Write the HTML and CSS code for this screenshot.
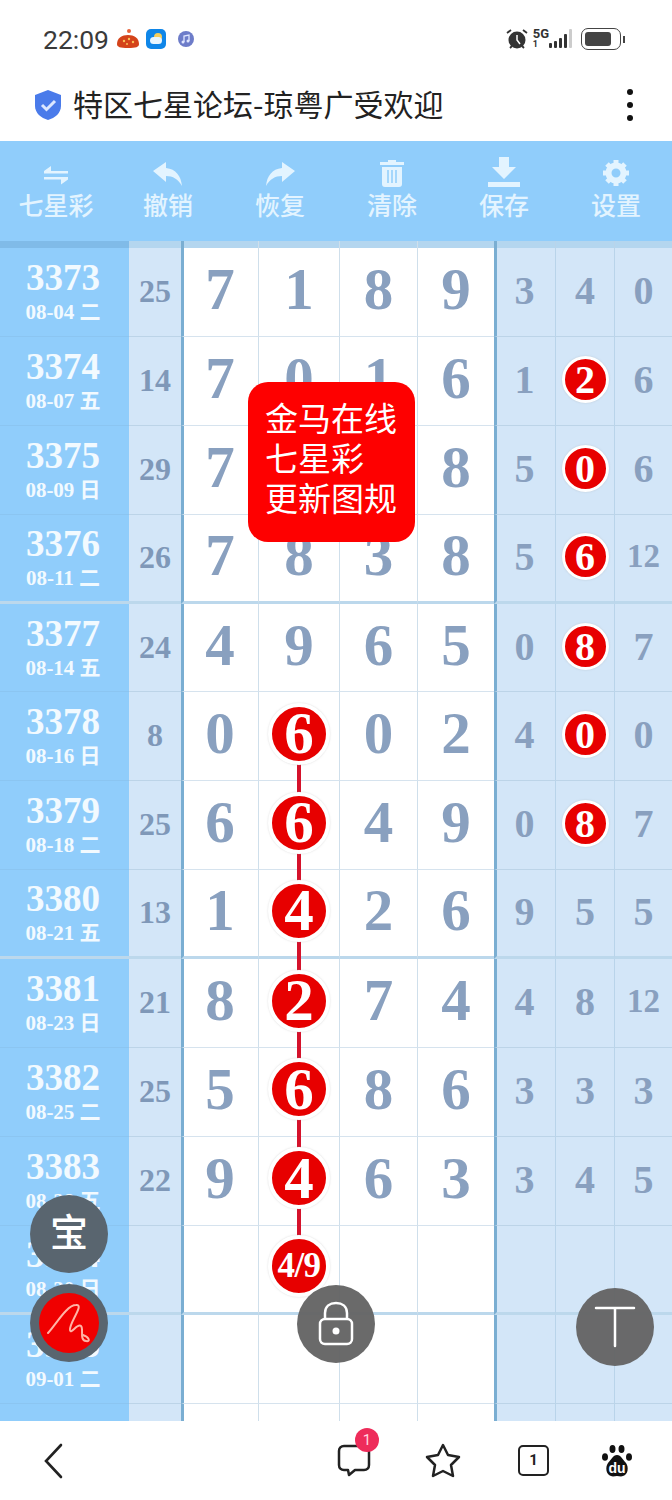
FILE: index.html
```html
<!DOCTYPE html>
<html lang="zh">
<head>
  <meta charset="UTF-8" />
  <title>特区七星论坛-琼粤广受欢迎</title>
  <link rel="stylesheet" href="styles.css">
</head>
<body>
  <div class="phone">
    <div class="statusbar">
      <div class="status-left">
        <span class="time">22:09</span>
        <svg class="app-icon" width="26" height="24" viewBox="0 0 26 24"><circle cx="14" cy="4" r="2" fill="#e8633a"/><path d="M2 17c0-6 5-9 11-9s11 3 11 9c0 3-3 4-11 4S2 20 2 17z" fill="#d4431a"/><circle cx="9" cy="14" r="1.2" fill="#f9c25a"/><circle cx="14" cy="12" r="1.2" fill="#f9c25a"/><circle cx="18" cy="15" r="1.2" fill="#f9c25a"/><circle cx="12" cy="17" r="1" fill="#f9c25a"/></svg>
        <svg class="app-icon weather" width="22" height="22" viewBox="0 0 22 22"><rect x="1" y="1" width="20" height="20" rx="5" fill="#0f86e8"/><circle cx="13" cy="9" r="4" fill="#f7cf5b"/><rect x="5" y="9" width="12" height="7" rx="3.5" fill="#e9f6ff"/></svg>
        <svg class="app-icon" width="18" height="18" viewBox="0 0 18 18"><circle cx="9" cy="9" r="8" fill="#6d7cc9"/><path d="M7 12V6l5-1v6" fill="none" stroke="#dfe6ff" stroke-width="1.3"/><circle cx="6" cy="12" r="1.5" fill="#dfe6ff"/><circle cx="11" cy="11" r="1.5" fill="#dfe6ff"/></svg>
      </div>
      <div class="status-right">
        <svg width="24" height="24" viewBox="0 0 24 24"><circle cx="12" cy="13" r="8.5" fill="#333"/><path d="M12 8v5l3 4" fill="none" stroke="#fff" stroke-width="1.5"/><path d="M2 6l4-3M22 6l-4-3M5 21l2-2M19 21l-2-2" stroke="#333" stroke-width="1.8"/></svg>
        <span class="net"><b>5G</b><i>1</i></span>
        <svg width="26" height="22" viewBox="0 0 26 22"><rect x="0" y="15" width="3" height="5" rx="1" fill="#333"/><rect x="5" y="13" width="3" height="7" rx="1" fill="#333"/><rect x="10" y="10" width="3" height="10" rx="1" fill="#333"/><rect x="15" y="6" width="3" height="14" rx="1" fill="#333"/><rect x="20" y="1" width="3" height="19" rx="1" fill="#ccc"/></svg>
        <div class="battery"><div class="battery-fill"></div></div>
        <div class="battery-tip"></div>
      </div>
    </div>

    <div class="titlebar">
      <svg width="30" height="32" viewBox="0 0 30 32"><path d="M15 1l13 5v11c0 7-6 12-13 14C8 29 2 24 2 17V6z" fill="#4a7bea"/><path d="M9 16l4.500 4.500L22 12" fill="none" stroke="#dce7ff" stroke-width="3"/></svg>
      <h1 class="title">特区七星论坛-琼粤广受欢迎</h1>
      <div class="more"><span></span><span></span><span></span></div>
    </div>

    <div class="toolbar">
      <div class="tool">
        <svg width="26" height="26" viewBox="0 0 26 26"><path d="M1 10h24v2.500H1zM1 10l7-5v5zM1 16h24v2.500H1zM25 18.500l-7 5v-5z" fill="#e3f4ff"/></svg>
        <span>七星彩</span>
      </div>
      <div class="tool">
        <svg width="32" height="26" viewBox="0 0 32 26"><path d="M1 10L14 1v6c10 1 15 8 16 18-4-7-9-10-16-10v6z" fill="#e3f4ff"/></svg>
        <span>撤销</span>
      </div>
      <div class="tool">
        <svg width="32" height="26" viewBox="0 0 32 26"><path d="M31 10L18 1v6C8 8 3 15 2 25c4-7 9-10 16-10v6z" fill="#e3f4ff"/></svg>
        <span>恢复</span>
      </div>
      <div class="tool">
        <svg width="28" height="28" viewBox="0 0 28 28"><path d="M10 1h8v2h8v3H2V3h8zM4 8h20v17c0 2-1 3-3 3H7c-2 0-3-1-3-3z" fill="#e3f4ff"/><path d="M10 11v13M14 11v13M18 11v13" stroke="#90cdfb" stroke-width="1.500"/></svg>
        <span>清除</span>
      </div>
      <div class="tool">
        <svg width="32" height="30" viewBox="0 0 32 30"><path d="M11 0h10v10h7L16 22 4 10h7zM0 25h32v5H0z" fill="#e3f4ff"/></svg>
        <span>保存</span>
      </div>
      <div class="tool">
        <svg width="28" height="28" viewBox="0 0 28 28"><circle cx="14" cy="14" r="7.500" fill="none" stroke="#e3f4ff" stroke-width="6"/><path d="M14 1v6M14 21v6M1 14h6M21 14h6M5 5l4 4M19 19l4 4M23 5l-4 4M9 19l-4 4" stroke="#e3f4ff" stroke-width="5"/></svg>
        <span>设置</span>
      </div>
    </div>

    <div class="board">
      <div class="row head"><div class="c-date"></div><div class="c-sum"></div><div class="c-m first"></div><div class="c-m"></div><div class="c-m"></div><div class="c-m"></div><div class="c-r first"></div><div class="c-r"></div><div class="c-r"></div></div>

      <div class="row"><div class="c-date"><b>3373</b><small>08-04 二</small></div><div class="c-sum">25</div><div class="c-m first">7</div><div class="c-m">1</div><div class="c-m">8</div><div class="c-m">9</div><div class="c-r first">3</div><div class="c-r">4</div><div class="c-r">0</div></div>
      <div class="row"><div class="c-date"><b>3374</b><small>08-07 五</small></div><div class="c-sum">14</div><div class="c-m first">7</div><div class="c-m">0</div><div class="c-m">1</div><div class="c-m">6</div><div class="c-r first">1</div><div class="c-r"><span class="ball">2</span></div><div class="c-r">6</div></div>
      <div class="row"><div class="c-date"><b>3375</b><small>08-09 日</small></div><div class="c-sum">29</div><div class="c-m first">7</div><div class="c-m"></div><div class="c-m"></div><div class="c-m">8</div><div class="c-r first">5</div><div class="c-r"><span class="ball">0</span></div><div class="c-r">6</div></div>
      <div class="row week"><div class="c-date"><b>3376</b><small>08-11 二</small></div><div class="c-sum">26</div><div class="c-m first">7</div><div class="c-m">8</div><div class="c-m">3</div><div class="c-m">8</div><div class="c-r first">5</div><div class="c-r"><span class="ball">6</span></div><div class="c-r small">12</div></div>
      <div class="row"><div class="c-date"><b>3377</b><small>08-14 五</small></div><div class="c-sum">24</div><div class="c-m first">4</div><div class="c-m">9</div><div class="c-m">6</div><div class="c-m">5</div><div class="c-r first">0</div><div class="c-r"><span class="ball">8</span></div><div class="c-r">7</div></div>
      <div class="row"><div class="c-date"><b>3378</b><small>08-16 日</small></div><div class="c-sum">8</div><div class="c-m first">0</div><div class="c-m link"><span class="ball">6</span></div><div class="c-m">0</div><div class="c-m">2</div><div class="c-r first">4</div><div class="c-r"><span class="ball">0</span></div><div class="c-r">0</div></div>
      <div class="row"><div class="c-date"><b>3379</b><small>08-18 二</small></div><div class="c-sum">25</div><div class="c-m first">6</div><div class="c-m link"><span class="ball">6</span></div><div class="c-m">4</div><div class="c-m">9</div><div class="c-r first">0</div><div class="c-r"><span class="ball">8</span></div><div class="c-r">7</div></div>
      <div class="row week"><div class="c-date"><b>3380</b><small>08-21 五</small></div><div class="c-sum">13</div><div class="c-m first">1</div><div class="c-m link"><span class="ball">4</span></div><div class="c-m">2</div><div class="c-m">6</div><div class="c-r first">9</div><div class="c-r">5</div><div class="c-r">5</div></div>
      <div class="row"><div class="c-date"><b>3381</b><small>08-23 日</small></div><div class="c-sum">21</div><div class="c-m first">8</div><div class="c-m link"><span class="ball">2</span></div><div class="c-m">7</div><div class="c-m">4</div><div class="c-r first">4</div><div class="c-r">8</div><div class="c-r small">12</div></div>
      <div class="row"><div class="c-date"><b>3382</b><small>08-25 二</small></div><div class="c-sum">25</div><div class="c-m first">5</div><div class="c-m link"><span class="ball">6</span></div><div class="c-m">8</div><div class="c-m">6</div><div class="c-r first">3</div><div class="c-r">3</div><div class="c-r">3</div></div>
      <div class="row"><div class="c-date"><b>3383</b><small>08-28 五</small></div><div class="c-sum">22</div><div class="c-m first">9</div><div class="c-m link"><span class="ball">4</span></div><div class="c-m">6</div><div class="c-m">3</div><div class="c-r first">3</div><div class="c-r">4</div><div class="c-r">5</div></div>
      <div class="row week"><div class="c-date"><b>3384</b><small>08-30 日</small></div><div class="c-sum"></div><div class="c-m first"></div><div class="c-m"><span class="ball pair">4/9</span></div><div class="c-m"></div><div class="c-m"></div><div class="c-r first"></div><div class="c-r"></div><div class="c-r"></div></div>
      <div class="row"><div class="c-date"><b>3385</b><small>09-01 二</small></div><div class="c-sum"></div><div class="c-m first"></div><div class="c-m"></div><div class="c-m"></div><div class="c-m"></div><div class="c-r first"></div><div class="c-r"></div><div class="c-r"></div></div>
      <div class="row"><div class="c-date"></div><div class="c-sum"></div><div class="c-m first"></div><div class="c-m"></div><div class="c-m"></div><div class="c-m"></div><div class="c-r first"></div><div class="c-r"></div><div class="c-r"></div></div>

      <div class="popup">金马在线<br>七星彩<br>更新图规</div>

      <div class="fab fab-bao">宝</div>
      <div class="fab fab-sign">
        <div class="sign-dot">
          <svg width="60" height="60" viewBox="0 0 60 60"><path d="M9 40C18 30 28 12 37 12C46 11 30 30 31 37C32 42 38 30 42 33C45 36 40 47 47 48C52 49 50 44 44 42" fill="none" stroke="#ffb4a6" stroke-width="2" stroke-linecap="round"/></svg>
        </div>
      </div>
      <div class="fab fab-lock">
        <svg width="38" height="46" viewBox="0 0 38 46"><path d="M8 18V12C8 5 13 2 19 2s11 3 11 10v6" fill="none" stroke="#fff" stroke-width="2.500"/><rect x="3" y="18" width="32" height="25" rx="5" fill="none" stroke="#fff" stroke-width="2.500"/><circle cx="19" cy="30" r="3.500" fill="#fff"/></svg>
      </div>
      <div class="fab fab-top">
        <svg width="42" height="42" viewBox="0 0 42 42"><path d="M2 2h38M21 2v38" fill="none" stroke="#fff" stroke-width="2.500" stroke-linecap="round"/></svg>
      </div>
    </div>

    <div class="navbar">
      <svg class="nav-back" width="19" height="36" viewBox="0 0 19 36"><path d="M17 2L2 18l15 16" fill="none" stroke="#222" stroke-width="2.600" stroke-linecap="round"/></svg>
      <div class="nav-right">
        <div class="nav-chat">
          <svg width="36" height="36" viewBox="0 0 36 36"><path d="M8 3h20c3 0 5 2 5 5v14c0 3-2 5-5 5H19l-6 5-1-5H8c-3 0-5-2-5-5V8c0-3 2-5 5-5z" fill="none" stroke="#222" stroke-width="2.500" stroke-linejoin="round"/></svg>
          <span class="badge">1</span>
        </div>
        <svg width="36" height="36" viewBox="0 0 36 36"><path d="M18 2l5 10 11 2-8 8 2 11-10-5-10 5 2-11-8-8 11-2z" fill="none" stroke="#222" stroke-width="2.500" stroke-linejoin="round"/></svg>
        <div class="nav-tabs">1</div>
        <svg class="nav-paw" width="32" height="34" viewBox="0 0 32 34"><ellipse cx="11.500" cy="5" rx="3" ry="4" fill="#111"/><ellipse cx="20.500" cy="5" rx="3" ry="4" fill="#111"/><ellipse cx="4" cy="13" rx="3" ry="3.800" fill="#111"/><ellipse cx="28" cy="13" rx="3" ry="3.800" fill="#111"/><path d="M16 11c4 0 6 5 9 8 3 4 2 12-3 13-2 1-4 0-6 0s-4 1-6 0c-5-1-6-9-3-13 3-3 5-8 9-8z" fill="#111"/><text x="16" y="29" text-anchor="middle" class="paw-text">du</text></svg>
      </div>
    </div>
  </div>
</body>
</html>
```

FILE: styles.css
```css
html, body {
  margin: 0;
  padding: 0;
  background: #fff;
}

.phone {
  width: 672px;
  height: 1500px;
  overflow: hidden;
  display: flex;
  flex-direction: column;
  font-family: "Noto Sans CJK SC", "Noto Sans", sans-serif;
}

/* status bar */
.statusbar {
  height: 78px;
  flex: none;
  display: flex;
  justify-content: space-between;
  align-items: center;
  padding: 0 47px 0 43px;
  box-sizing: border-box;
}

.status-left,
.status-right {
  display: flex;
  align-items: center;
}

.time {
  font-family: Roboto, sans-serif;
  font-size: 26.500px;
  color: #3a3a3a;
  margin-right: 6px;
}

.app-icon {
  margin-right: 6px;
}

.app-icon.weather {
  margin: 0 10px 0 -2px;
}

.status-right {
  gap: 4px;
}

.net {
  display: flex;
  flex-direction: column;
  margin-right: -4px;
  font-family: Roboto, sans-serif;
  line-height: 10px;
  color: #333;
}

.net b {
  font-size: 13px;
}

.net i {
  font-size: 9px;
  font-style: normal;
  font-weight: bold;
}

.battery {
  width: 40px;
  height: 22px;
  margin-left: 2px;
  border: 1.500px solid #444;
  border-radius: 7px;
  padding: 3px;
  box-sizing: border-box;
}

.battery-fill {
  width: 26px;
  height: 100%;
  background: #444;
  border-radius: 3px;
}

.battery-tip {
  width: 2px;
  height: 7px;
  background: #444;
  margin-left: -2px;
}

/* title */
.titlebar {
  height: 63px;
  flex: none;
  display: flex;
  align-items: center;
  padding: 0 39px 10px 33px;
  box-sizing: border-box;
}

.title {
  flex: 1;
  margin: -4px 0 0 10px;
  font-size: 30px;
  font-weight: 400;
  color: #222;
}

.more {
  display: flex;
  flex-direction: column;
  gap: 7px;
}

.more span {
  width: 6px;
  height: 6px;
  border-radius: 50%;
  background: #111;
}

/* toolbar */
.toolbar {
  height: 100px;
  flex: none;
  background: #90cdfb;
  display: grid;
  grid-template-columns: repeat(6, 112px);
}

.tool {
  display: flex;
  flex-direction: column;
  align-items: center;
  justify-content: flex-end;
  padding-bottom: 21px;
  color: #e3f4ff;
  font-size: 25px;
  font-weight: 500;
  line-height: 32px;
}

.tool svg {
  margin-bottom: 1px;
}

/* table */
.board {
  position: relative;
  height: 1180px;
  flex: none;
  overflow: hidden;
  background: #fff;
}

.row {
  display: grid;
  grid-template-columns: 129px 52px 77px 81px 78px 77px 61px 59px 58px;
  height: 88.9px;
  box-sizing: border-box;
}

.row.head {
  height: 7px;
}

.row > div {
  display: flex;
  align-items: center;
  justify-content: center;
  box-sizing: border-box;
  padding-bottom: 5px;
  font-family: "Liberation Serif", "Noto Sans CJK SC", serif;
  font-weight: bold;
  color: #89a0bf;
  border-bottom: 1px solid #d6e3ee;
}

.row.week > div {
  border-bottom: 3px solid #bcd8ec;
}

.head > div {
  padding: 0;
  border-bottom: 0;
  background: #b4d6ef;
}

.row.head > .c-date {
  padding: 0;
  background: #80bbe8;
}

.c-date {
  background: #90cdfb;
  flex-direction: column;
}

.row > .c-date {
  color: #f2faff;
  padding: 0 3px 4px 0;
  border-bottom-color: #8bc5f1;
}

.c-date b {
  font-size: 37px;
  line-height: 44px;
}

.c-date small {
  font-size: 21px;
  line-height: 24px;
  white-space: nowrap;
}

.c-sum {
  background: #d3e6f8;
  font-size: 32px;
}

.row > .c-sum {
  color: #7f98b8;
  padding-bottom: 1px;
  border-bottom-color: #bcd4e8;
}

.c-m {
  font-size: 59px;
  border-left: 1px solid #cfdfeb;
}

.c-m.first {
  border-left: 3px solid #7aaed2;
  padding-right: 2px;
}

.c-r {
  background: #d3e6f8;
  font-size: 40px;
  border-left: 1px solid #b9d4ea;
}

.row > .c-r {
  padding-bottom: 3px;
  border-bottom-color: #bcd4e8;
}

.c-r.first {
  border-left: 3px solid #7aaed2;
  padding-right: 3px;
}

.c-r.small {
  font-size: 33px;
}

/* red balls */
.ball {
  position: relative;
  z-index: 1;
  width: 47px;
  height: 47px;
  box-sizing: border-box;
  display: flex;
  align-items: center;
  justify-content: center;
  border: 3px solid #fff;
  border-radius: 50%;
  background: #e70000;
  color: #fff;
  box-shadow: 0 0 2px rgba(150, 150, 150, 0.35);
}

.c-m .ball {
  width: 62px;
  height: 62px;
  flex: none;
  border-width: 4px;
}

.ball.pair {
  font-size: 35px;
  letter-spacing: -0.5px;
}

.link {
  position: relative;
}

.link::after {
  content: "";
  position: absolute;
  left: 38px;
  top: 40px;
  width: 4px;
  height: 89px;
  background: #d5122b;
}

/* popup over the table */
.popup {
  position: absolute;
  left: 248px;
  top: 141px;
  width: 167px;
  height: 160px;
  box-sizing: border-box;
  padding: 15px 0 0 17px;
  background: #fe0000;
  border-radius: 20px;
  color: #fff;
  font-size: 33px;
  line-height: 40px;
  z-index: 5;
}

/* floating buttons */
.fab {
  position: absolute;
  width: 78px;
  height: 78px;
  border-radius: 50%;
  display: flex;
  align-items: center;
  justify-content: center;
  z-index: 6;
  background: rgba(100, 100, 100, 0.96);
}

.fab-bao {
  left: 30px;
  top: 954px;
  box-sizing: border-box;
  padding-bottom: 8px;
  background: #59656f;
  color: #fff;
  font-size: 38px;
  font-weight: 500;
  line-height: 1;
}

.fab-sign {
  left: 30px;
  top: 1043px;
  background: #59656f;
}

.sign-dot {
  width: 60px;
  height: 60px;
  border-radius: 50%;
  background: #f00000;
}

.sign-dot svg {
  display: block;
}

.fab-lock {
  left: 297px;
  top: 1044px;
}

.fab-top {
  left: 576px;
  top: 1047px;
}

/* bottom navigation */
.navbar {
  flex: 1;
  display: flex;
  align-items: center;
  justify-content: space-between;
  padding: 0 39px 0 44px;
  background: #fff;
}

.nav-right {
  display: flex;
  align-items: center;
  gap: 53px;
}

.nav-chat {
  position: relative;
  width: 36px;
  height: 36px;
}

.badge {
  position: absolute;
  left: 19px;
  top: -15px;
  width: 24px;
  height: 24px;
  border-radius: 50%;
  background: #ee2c5a;
  color: #ffd7e0;
  font-family: Roboto, sans-serif;
  font-size: 15px;
  line-height: 24px;
  text-align: center;
}

.nav-tabs {
  width: 27px;
  height: 27px;
  margin: 0 -1px 0 4px;
  border: 2.500px solid #222;
  border-radius: 5px;
  font-family: Roboto, sans-serif;
  font-weight: bold;
  font-size: 15px;
  line-height: 27px;
  text-align: center;
  color: #222;
}

.paw-text {
  font-family: "Liberation Sans", sans-serif;
  font-size: 14px;
  font-weight: bold;
  fill: #fff;
}
```
